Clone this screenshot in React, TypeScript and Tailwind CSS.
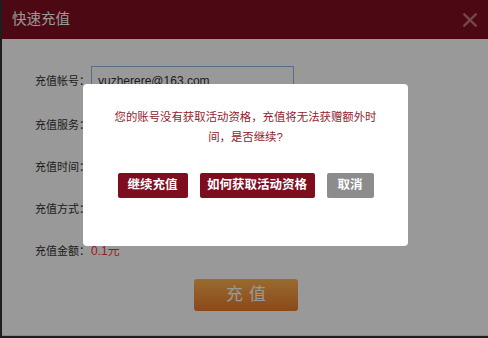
import React from "react";

const font = { fontFamily: '"Liberation Sans", "Noto Sans CJK SC", sans-serif' };

function Row({ label, children, className = "" }: { label: string; children?: React.ReactNode; className?: string }) {
  return (
    <div className={`flex h-[30px] items-center ${className}`}>
      <div className="w-[56px] text-[11px] text-[#333] whitespace-nowrap">{label}</div>
      {children}
    </div>
  );
}

export default function App() {
  return (
    <div className="relative h-[338px] w-[488px] overflow-hidden bg-[#333]" style={font}>
      <div className="ml-[2px] flex h-[336px] flex-col bg-white border-b border-[#e0e0e0]">
        <div className="flex h-[39px] shrink-0 items-center justify-between bg-[#800f20] pl-[10px] pr-[11px]">
          <span className="text-[14.5px] text-white">快速充值</span>
          <svg width="14" height="14" viewBox="0 0 14 14">
            <path d="M1.3 1.3 L12.7 12.7 M12.7 1.3 L1.3 12.7" stroke="#c27580" strokeWidth="2.4" strokeLinecap="round" />
          </svg>
        </div>
        <div className="flex flex-col pl-[33px]">
          <Row label="充值帐号：" className="mt-[27px]">
            <div className="flex h-[30px] w-[203px] items-center border border-[#8fb8e8] pl-[6px] text-[12px] text-[#333]">
              yuzherere@163.com
            </div>
          </Row>
          <Row label="充值服务：" className="mt-[14px]" />
          <Row label="充值时间：" className="mt-[12px]" />
          <Row label="充值方式：" className="mt-[12px]" />
          <Row label="充值金额：" className="mt-[12px]">
            <span className="text-[12px] text-[#ff2d3c]">0.1元</span>
          </Row>
          <div className="mt-[13px] pl-[159px]">
            <div className="flex h-[32px] w-[104px] items-center justify-center rounded-[3px] bg-gradient-to-b from-[#ffb24e] to-[#e7792a] text-[17px] tracking-[6px] text-white">
              <span className="pl-[6px]">充值</span>
            </div>
          </div>
        </div>
      </div>

      <div className="absolute inset-0 bg-black/40" />

      <div className="absolute left-[83px] top-[84px] flex h-[162px] w-[325px] flex-col items-center rounded-[4px] bg-white">
        <p className="mt-[23px] text-center text-[11.4px] leading-[20px] text-[#921c2e]">
          您的账号没有获取活动资格，充值将无法获赠额外时
          <br />
          间，是否继续?
        </p>
        <div className="mt-[26px] flex gap-[12px]">
          <div className="flex h-[25px] w-[70px] items-center justify-center rounded-[2px] bg-[#7e0d1f] text-[12.5px] font-bold text-white">继续充值</div>
          <div className="flex h-[25px] w-[115px] items-center justify-center rounded-[2px] bg-[#7e0d1f] text-[12.5px] font-bold text-white">如何获取活动资格</div>
          <div className="flex h-[25px] w-[47px] items-center justify-center rounded-[2px] bg-[#8c8c8c] text-[12.5px] font-bold text-white">取消</div>
        </div>
      </div>
    </div>
  );
}
